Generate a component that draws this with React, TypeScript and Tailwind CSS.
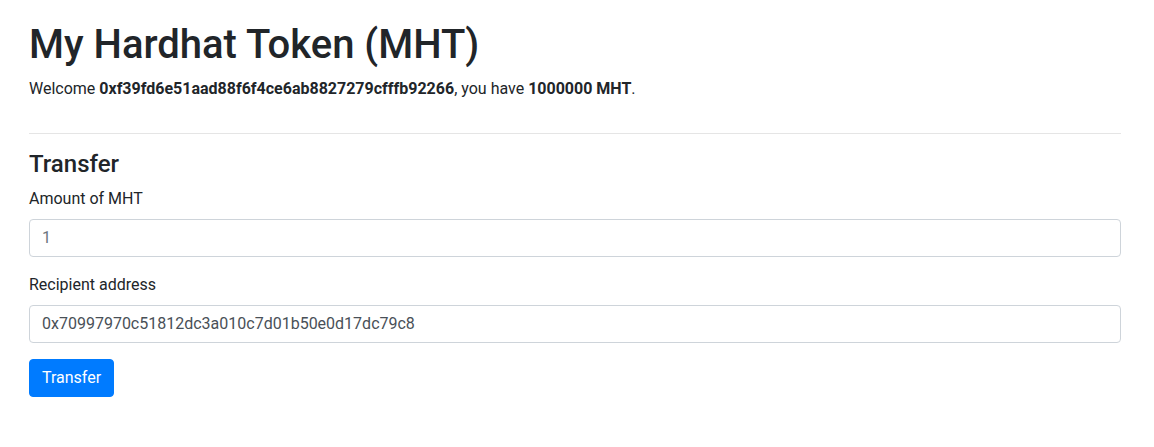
import { useState } from "react";

export default function App() {
  const [amount, setAmount] = useState("");
  const [to, setTo] = useState("0x70997970c51812dc3a010c7d01b50e0d17dc79c8");

  return (
    <div
      className="min-h-screen bg-white text-[#212529] text-base leading-6"
      style={{ fontFamily: "Roboto, 'Liberation Sans', sans-serif" }}
    >
      <div className="ml-[29px] w-[1092px] pt-[21px] pb-6">
        <div className="flex flex-col">
          <h1 className="text-[40px] leading-[1.2] font-medium mb-2">My Hardhat Token (MHT)</h1>
          <p className="mb-4">
            Welcome <b className="font-bold">0xf39fd6e51aad88f6f4ce6ab8827279cfffb92266</b>, you have{" "}
            <b className="font-bold">1000000 MHT</b>.
          </p>
        </div>
        <hr className="mt-4 mb-4 border-0 border-t border-black/10" />
        <div className="flex flex-col">
          <h4 className="text-2xl leading-[1.2] font-medium mb-2">Transfer</h4>
          <form onSubmit={(e) => e.preventDefault()}>
            <div className="mb-4">
              <label className="block mb-2">Amount of MHT</label>
              <input
                type="number"
                value={amount}
                onChange={(e) => setAmount(e.target.value)}
                placeholder="1"
                className="block w-full h-[38px] px-3 py-1.5 border border-[#ced4da] rounded text-[#495057] placeholder:text-[#6c757d] outline-none"
              />
            </div>
            <div className="mb-4">
              <label className="block mb-2">Recipient address</label>
              <input
                type="text"
                value={to}
                onChange={(e) => setTo(e.target.value)}
                className="block w-full h-[38px] px-3 py-1.5 border border-[#ced4da] rounded text-[#495057] outline-none"
              />
            </div>
            <button
              type="submit"
              className="h-[38px] px-3 py-1.5 bg-[#007bff] border border-[#007bff] rounded text-white"
            >
              Transfer
            </button>
          </form>
        </div>
      </div>
    </div>
  );
}
